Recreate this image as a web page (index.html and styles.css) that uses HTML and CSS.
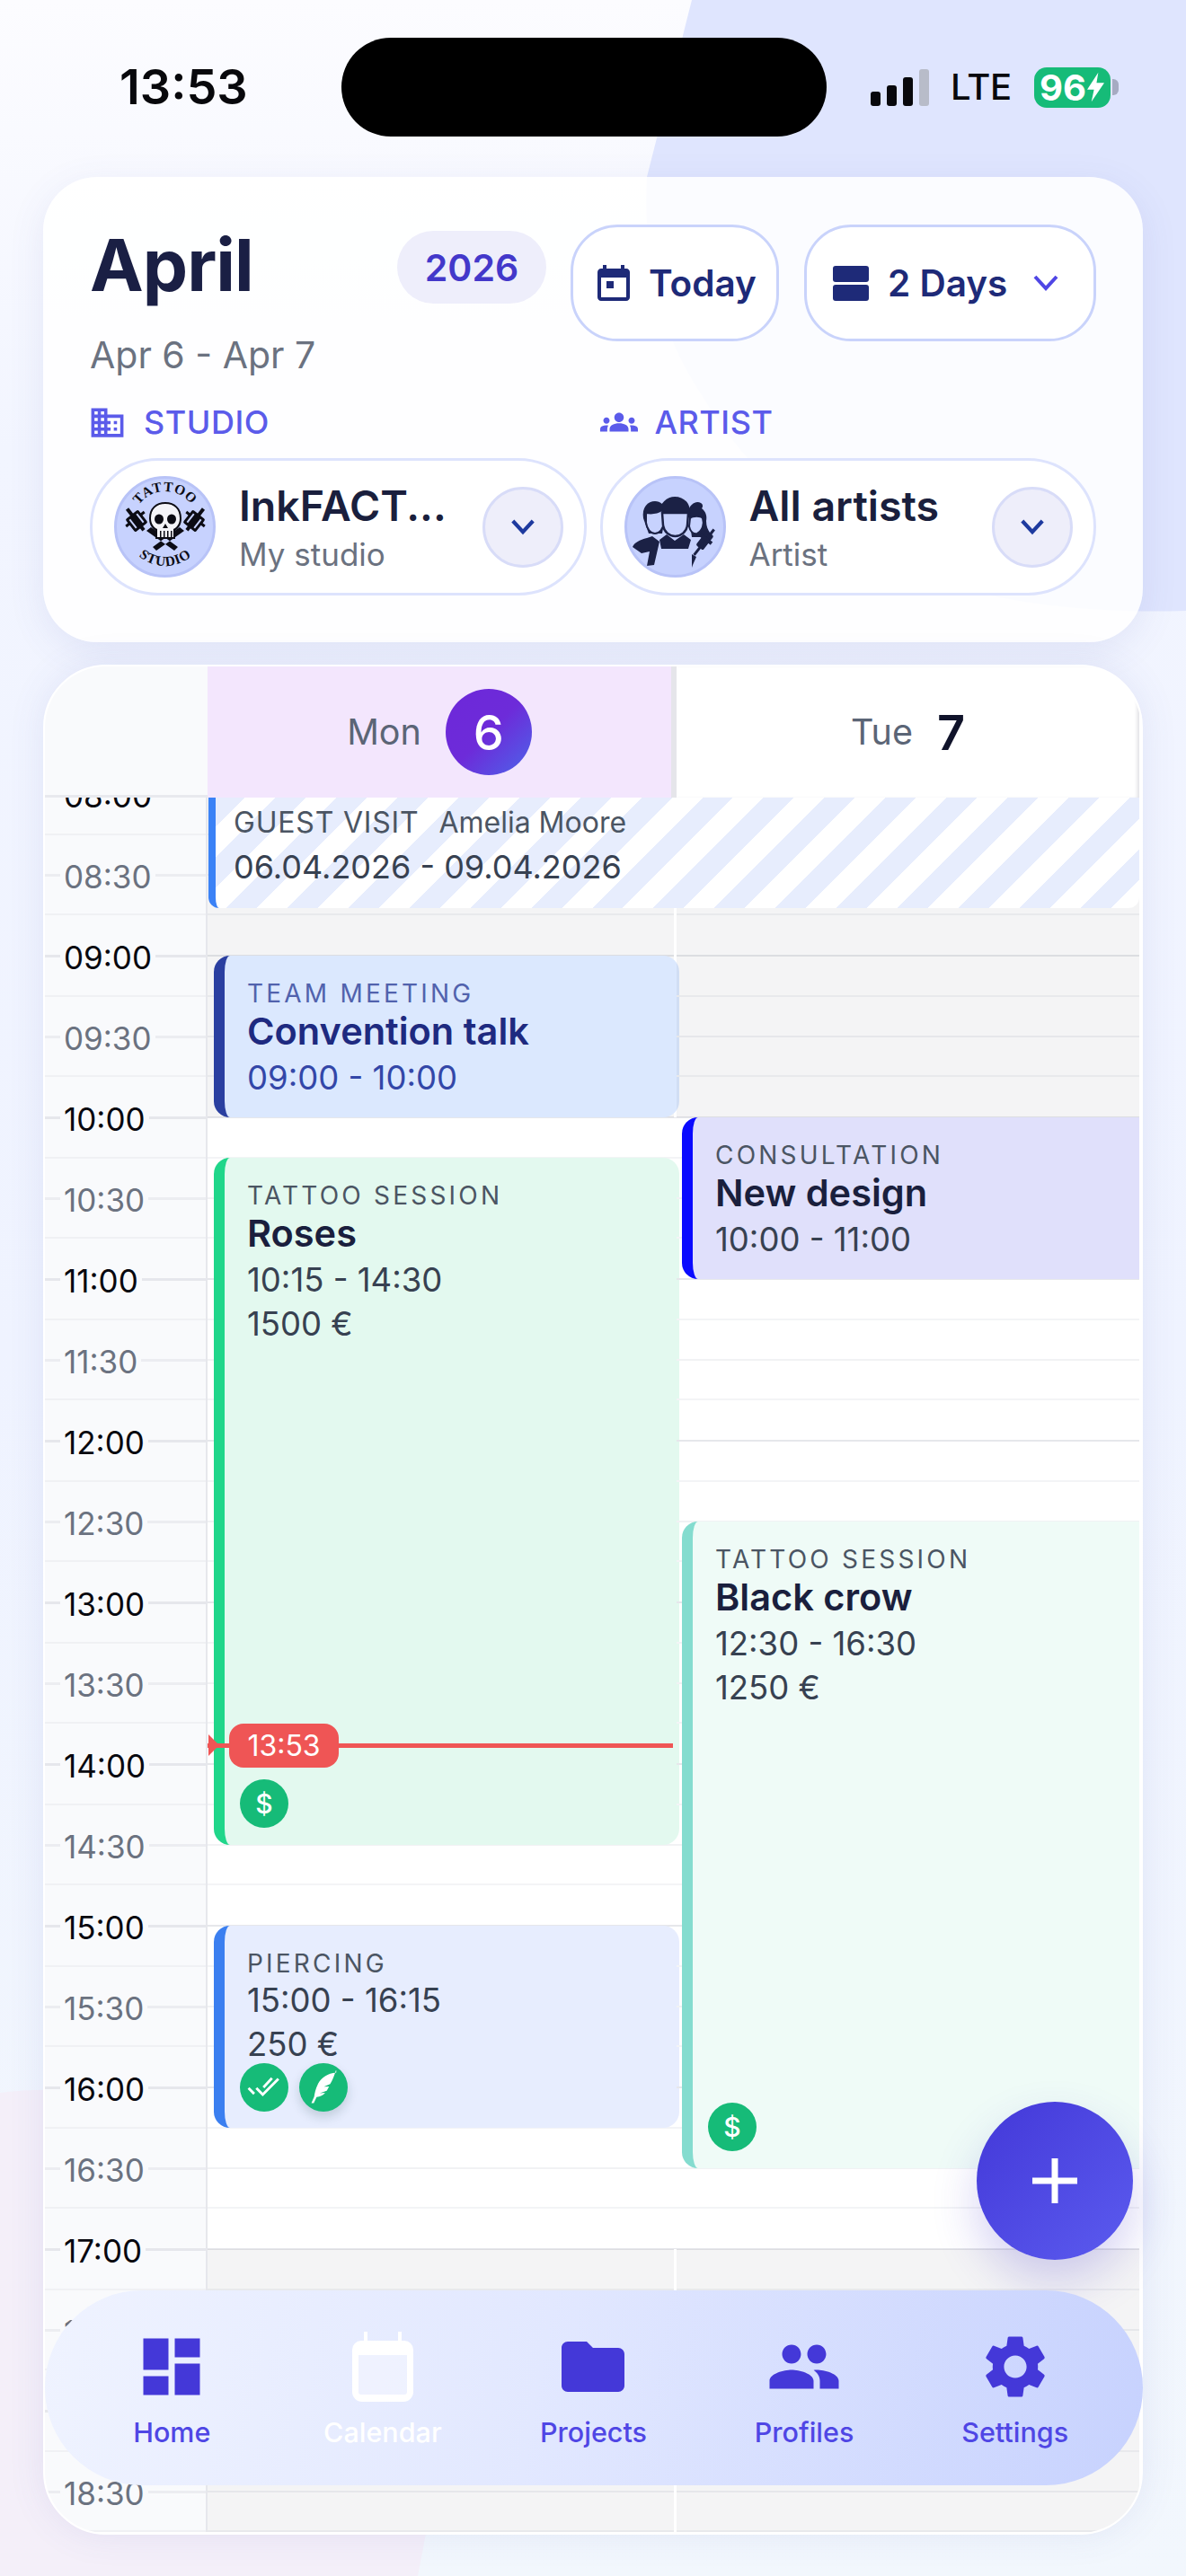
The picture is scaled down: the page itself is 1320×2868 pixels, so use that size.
FILE: index.html
```html
<!DOCTYPE html>
<html lang="en">
<head>
<meta charset="utf-8">
<title>Calendar</title>
<link rel="stylesheet" href="styles.css">
</head>
<body>
<div class="screen">
  <div class="deco deco-top"></div>
  <div class="deco deco-bottom"></div>

  <div class="status">
    <div class="clock">13:53</div>
    <div class="island"></div>
    <div class="status-right">
      <div class="signal"><i class="b1"></i><i class="b2"></i><i class="b3"></i><i class="b4"></i></div>
      <div class="lte">LTE</div>
      <div class="battery">
        <span>96</span>
        <svg class="bolt" viewBox="0 0 20 34"><path d="M13 0 0 20h8L5 34 20 12h-9z"/></svg>
      </div>
      <div class="nub"></div>
    </div>
  </div>

  <section class="head-card">
    <div class="head-top">
      <div class="title-col">
        <div class="month">April</div>
        <div class="range">Apr 6 - Apr 7</div>
      </div>
      <div class="year">2026</div>
      <div class="btn btn-today">
        <svg class="ic48" viewBox="0 0 24 24"><path d="M19 4h-1V2h-2v2H8V2H6v2H5c-1.11 0-1.99.9-1.99 2L3 20c0 1.1.89 2 2 2h14c1.1 0 2-.9 2-2V6c0-1.1-.9-2-2-2zm0 16H5V9h14v11zM8 11h4v4H8z"/></svg>
        <span>Today</span>
      </div>
      <div class="btn btn-days">
        <svg class="ic48" viewBox="0 0 24 24"><rect x="2" y="2.500" width="20" height="9" rx="1.500"/><rect x="2" y="13" width="20" height="9" rx="1.500"/></svg>
        <span>2 Days</span>
        <svg class="chev-sm" viewBox="0 0 30 20"><path d="M3 3l12 13L27 3"/></svg>
      </div>
    </div>

    <div class="pickers">
      <div class="picker">
        <div class="pick-label">
          <svg class="ic-domain" viewBox="0 0 24 24"><path d="M12 7V3H2v18h20V7H12zM6 19H4v-2h2v2zm0-4H4v-2h2v2zm0-4H4V9h2v2zm0-4H4V5h2v2zm4 12H8v-2h2v2zm0-4H8v-2h2v2zm0-4H8V9h2v2zm0-4H8V5h2v2zm10 12h-8v-2h2v-2h-2v-2h2v-2h-2V9h8v10zm-2-8h-2v2h2v-2zm0 4h-2v2h2v-2z"/></svg>
          <span class="studio-text">STUDIO</span>
        </div>
        <div class="select">
          <div class="avatar">
            <svg viewBox="0 0 107 107">
              <defs>
                <path id="arcTop" d="M18 50A36 36 0 0 1 90 50"/>
                <path id="arcBot" d="M9 52A45 45 0 0 0 99 52"/>
              </defs>
              <text class="logo-text"><textPath href="#arcTop" startOffset="50%" text-anchor="middle">TATTOO</textPath></text>
              <text class="logo-text"><textPath href="#arcBot" startOffset="50%" text-anchor="middle">STUDIO</textPath></text>
              <g fill="#0c0c14">
                <path d="M33 58l5-4 30 22-4 4zM75 58l-5-4-30 22 4 4z"/>
                <g transform="rotate(-38 22 47)">
                  <rect x="13" y="38" width="18" height="18" rx="2"/>
                  <rect x="9" y="43" width="26" height="3"/>
                  <rect x="20" y="30" width="4" height="30"/>
                  <path fill="#c7d2fe" d="M16 41h2v12h-2zM26 41h2v12h-2z"/>
                </g>
                <g transform="rotate(38 86 47)">
                  <rect x="77" y="38" width="18" height="18" rx="2"/>
                  <rect x="73" y="43" width="26" height="3"/>
                  <rect x="84" y="30" width="4" height="30"/>
                  <path fill="#c7d2fe" d="M80 41h2v12h-2zM90 41h2v12h-2z"/>
                </g>
              </g>
              <path fill="#0c0c14" d="M54 26c-11 0-18 7-18 18 0 7 3 11 7 14v9h22v-9c4-3 7-7 7-14 0-11-7-18-18-18z"/>
              <path fill="#f4f4f8" d="M54 28c-10 0-16 6-16 16 0 6 3 10 7 12v9h18v-9c4-2 7-6 7-12 0-10-6-16-16-16z"/>
              <g fill="#0c0c14">
                <ellipse cx="47" cy="45" rx="5" ry="5.500"/><ellipse cx="61" cy="45" rx="5" ry="5.500"/>
                <path d="M54 50l-3 5h6zM48 58h1.500v7H48zM52 58h1.500v7H52zM56 58h1.500v7H56zM60 58h1.500v7H60z"/>
              </g>
            </svg>
          </div>
          <div class="sel-text">
            <div class="sel-name">InkFACT...</div>
            <div class="sel-sub">My studio</div>
          </div>
          <div class="sel-chev"><svg viewBox="0 0 30 20"><path d="M3 3l12 13L27 3"/></svg></div>
        </div>
      </div>

      <div class="picker">
        <div class="pick-label">
          <svg class="ic-groups" viewBox="0 0 24 24"><path d="M12 12.750c1.630 0 3.070.39 4.240.9 1.080.48 1.760 1.560 1.760 2.730V18H6v-1.610c0-1.180.68-2.260 1.760-2.730 1.170-.52 2.610-.91 4.240-.91zM4 13c1.100 0 2-.9 2-2s-.9-2-2-2-2 .9-2 2 .9 2 2 2zm1.130 1.100C4.760 14.040 4.390 14 4 14c-.99 0-1.930.21-2.780.58C.48 14.900 0 15.620 0 16.430V18h4.500v-1.610c0-.83.23-1.610.63-2.290zM20 13c1.100 0 2-.9 2-2s-.9-2-2-2-2 .9-2 2 .9 2 2 2zm4 3.430c0-.81-.48-1.530-1.220-1.850-.85-.37-1.790-.58-2.780-.58-.39 0-.76.04-1.130.1.4.68.63 1.460.63 2.290V18H24v-1.570zM12 6c1.660 0 3 1.340 3 3s-1.340 3-3 3-3-1.340-3-3 1.340-3 3-3z"/></svg>
          <span class="artist-text">ARTIST</span>
        </div>
        <div class="select">
          <div class="avatar">
            <svg viewBox="0 0 107 107">
              <g fill="#1b2145">
                <path d="M68 36c2-8 9-12 14-9 2 1 3 4 1 6 5 4 6 9 5 14 0 6 2 10 4 13l-8 5H72z"/>
                <path d="M18 44c-2-12 5-19 13-19 6 0 11 4 12 12l-4 24H24z"/>
                <path d="M6 76c2-5 8-8 16-10l6-2 8 6-6 26-8 1 3-16-9 2z"/>
                <path d="M36 40c-1-12 8-20 17-20 10 0 18 7 17 20l3 3H33z"/>
                <path d="M36 68l8-6 9 7 10-7 8 6-3 10H38z"/>
                <g transform="rotate(38 84 72)">
                  <rect x="79" y="58" width="10" height="20" rx="2"/>
                  <rect x="83" y="52" width="3" height="36"/>
                  <path d="M76 64h16v4H76z"/>
                </g>
                <path d="M72 84l5 3-4 9 -1 3z"/>
              </g>
              <path fill="#c7d2fe" stroke="#1b2145" stroke-width="2" d="M70 44c3-3 12-3 14 0 2 6 0 14-6 17-5 1-8-3-9-8z"/>
              <path fill="#c7d2fe" stroke="#1b2145" stroke-width="2" d="M21 38c6 1 13 0 18-3l2 14c-1 7-5 12-10 12s-9-5-10-12z"/>
              <path fill="#c7d2fe" stroke="#1b2145" stroke-width="2.500" d="M39 38h29l-1 14c-1 7-7 12-13.500 12S41 59 40 52z"/>
            </svg>
          </div>
          <div class="sel-text">
            <div class="sel-name">All artists</div>
            <div class="sel-sub">Artist</div>
          </div>
          <div class="sel-chev"><svg viewBox="0 0 30 20"><path d="M3 3l12 13L27 3"/></svg></div>
        </div>
      </div>
    </div>
  </section>

  <section class="cal-card">
    <div class="cal-head">
      <div class="cal-corner"></div>
      <div class="cal-day cal-mon"><span class="dow">Mon</span><span class="dnum today-num">6</span></div>
      <div class="cal-day cal-tue"><span class="dow">Tue</span><span class="dnum">7</span></div>
    </div>
    <div class="cal-clip">
      <div class="cal-body">
        <div class="times">
          <div class="slot"><b class="hour">08:00</b></div>
          <div class="slot"><b>08:30</b></div>
          <div class="slot"><b class="hour">09:00</b></div>
          <div class="slot"><b>09:30</b></div>
          <div class="slot"><b class="hour">10:00</b></div>
          <div class="slot"><b>10:30</b></div>
          <div class="slot"><b class="hour">11:00</b></div>
          <div class="slot"><b>11:30</b></div>
          <div class="slot"><b class="hour">12:00</b></div>
          <div class="slot"><b>12:30</b></div>
          <div class="slot"><b class="hour">13:00</b></div>
          <div class="slot"><b>13:30</b></div>
          <div class="slot"><b class="hour">14:00</b></div>
          <div class="slot"><b>14:30</b></div>
          <div class="slot"><b class="hour">15:00</b></div>
          <div class="slot"><b>15:30</b></div>
          <div class="slot"><b class="hour">16:00</b></div>
          <div class="slot"><b>16:30</b></div>
          <div class="slot"><b class="hour">17:00</b></div>
          <div class="slot"><b>17:30</b></div>
          <div class="slot"><b class="hour">18:00</b></div>
          <div class="slot"><b>18:30</b></div>
        </div>

        <div class="day day-mon">
          <div class="off off-morning"></div>
          <div class="off off-evening"></div>
          <article class="ev ev-team">
            <div class="ev-label">TEAM MEETING</div>
            <div class="ev-title">Convention talk</div>
            <div class="ev-line ev-time">09:00 - 10:00</div>
          </article>
          <article class="ev ev-roses">
            <div class="ev-label">TATTOO SESSION</div>
            <div class="ev-title">Roses</div>
            <div class="ev-line ev-time">10:15 - 14:30</div>
            <div class="ev-line">1500 €</div>
            <div class="badges"><span class="badge">$</span></div>
          </article>
          <article class="ev ev-piercing">
            <div class="ev-label">PIERCING</div>
            <div class="ev-line">15:00 - 16:15</div>
            <div class="ev-line">250 €</div>
            <div class="badges badges-tight">
              <span class="badge"><svg viewBox="0 0 24 24"><path d="M1 12.500l4 4M6.500 12.500l4.500 4.500L22 6M11.500 12l6-6.500"/></svg></span>
              <span class="badge badge-shadow"><svg viewBox="0 0 24 24"><path class="fill" d="M21 1.500c-6 .5-10.500 3.500-12.800 8-1.700 3.400-2.400 6.700-2.700 9L3.500 23h1.700l2-4.200c2.500-.2 4.500-1.200 6-3l-3.800.3 4.900-1.800c.7-1 1.200-2 1.600-3l-3.600.3 4.400-1.900c1.800-3 3.200-6.400 4.300-10.700z"/></svg></span>
            </div>
          </article>
          <div class="now">
            <i class="now-tip"></i>
            <span class="now-tag">13:53</span>
          </div>
        </div>

        <div class="day day-tue">
          <div class="off off-morning"></div>
          <div class="off off-evening"></div>
          <article class="ev ev-consult">
            <div class="ev-label">CONSULTATION</div>
            <div class="ev-title">New design</div>
            <div class="ev-line ev-time">10:00 - 11:00</div>
          </article>
          <article class="ev ev-crow">
            <div class="ev-label">TATTOO SESSION</div>
            <div class="ev-title">Black crow</div>
            <div class="ev-line ev-time">12:30 - 16:30</div>
            <div class="ev-line">1250 €</div>
            <div class="badges"><span class="badge">$</span></div>
          </article>
        </div>

        <article class="guest">
          <div class="guest-top"><span class="guest-kind">GUEST VISIT</span><span>Amelia Moore</span></div>
          <div class="guest-dates">06.04.2026 - 09.04.2026</div>
        </article>
      </div>
    </div>
  </section>

  <button class="fab" type="button" aria-label="Add">
    <svg viewBox="0 0 50 50"><path d="M25 0v50M0 25h50"/></svg>
  </button>

  <nav class="tabbar">
    <div class="tab">
      <svg viewBox="0 0 24 24"><path d="M3 13h8V3H3v10zm0 8h8v-6H3v6zm10 0h8V11h-8v10zm0-18v6h8V3h-8z"/></svg>
      <span>Home</span>
    </div>
    <div class="tab tab-active">
      <svg viewBox="0 0 84 84">
        <path class="cal-fill" d="M9 22h66v50a6 6 0 0 1-6 6H15a6 6 0 0 1-6-6z"/>
        <path class="cal-solid" d="M21 3h4v10h34V3h4v10h3a10 10 0 0 1 10 10v47a11 11 0 0 1-11 11H19A11 11 0 0 1 8 70V23a10 10 0 0 1 10-10h3zM15 29v41a3 3 0 0 0 3 3h48a3 3 0 0 0 3-3V29z"/>
      </svg>
      <span>Calendar</span>
    </div>
    <div class="tab">
      <svg viewBox="0 0 24 24"><path d="M10 4H4c-1.100 0-2 .9-2 2v12c0 1.100.9 2 2 2h16c1.100 0 2-.9 2-2V8c0-1.100-.9-2-2-2h-8l-2-2z"/></svg>
      <span>Projects</span>
    </div>
    <div class="tab">
      <svg viewBox="0 0 24 24"><path d="M16 11c1.660 0 2.990-1.340 2.990-3S17.660 5 16 5c-1.660 0-3 1.340-3 3s1.340 3 3 3zm-8 0c1.660 0 2.990-1.340 2.990-3S9.660 5 8 5C6.340 5 5 6.340 5 8s1.340 3 3 3zm0 2c-2.330 0-7 1.170-7 3.500V19h14v-2.500c0-2.330-4.670-3.500-7-3.500zm8 0c-.29 0-.62.02-.97.05 1.160.84 1.970 1.970 1.970 3.450V19h6v-2.500c0-2.330-4.670-3.500-7-3.500z"/></svg>
      <span>Profiles</span>
    </div>
    <div class="tab">
      <svg viewBox="0 0 24 24"><path d="M19.140 12.940c.04-.3.06-.61.06-.94 0-.32-.02-.64-.07-.94l2.030-1.580c.18-.14.23-.41.12-.61l-1.920-3.320c-.12-.22-.37-.29-.59-.22l-2.390.96c-.5-.38-1.030-.7-1.620-.94l-.36-2.540c-.04-.24-.24-.41-.48-.41h-3.840c-.24 0-.43.17-.47.41l-.36 2.540c-.59.24-1.130.57-1.620.94l-2.390-.96c-.22-.08-.47 0-.59.22L2.740 8.870c-.12.21-.08.47.12.61l2.030 1.580c-.05.3-.09.63-.09.94s.02.64.07.94l-2.030 1.580c-.18.14-.23.41-.12.61l1.920 3.320c.12.22.37.29.59.22l2.390-.96c.5.38 1.030.7 1.620.94l.36 2.540c.05.24.24.41.48.41h3.840c.24 0 .44-.17.47-.41l.36-2.540c.59-.24 1.130-.56 1.620-.94l2.390.96c.22.08.47 0 .59-.22l1.920-3.320c.12-.22.07-.47-.12-.61l-2.010-1.580zM12 15.600c-1.980 0-3.600-1.620-3.600-3.600s1.620-3.600 3.600-3.600 3.600 1.620 3.600 3.600-1.620 3.600-3.600 3.600z"/></svg>
      <span>Settings</span>
    </div>
  </nav>
</div>
</body>
</html>
```

FILE: styles.css
```css
* { box-sizing: border-box; }
html, body { margin: 0; padding: 0; }
body {
  width: 1320px;
  height: 2868px;
  overflow: hidden;
  font-family: Inter, "Liberation Sans", sans-serif;
  color: #1a1f3d;
}
.screen {
  position: relative;
  width: 1320px;
  height: 2868px;
  overflow: hidden;
  background: linear-gradient(180deg, #fcfcff 0, #f2f5ff 500px, #eff3ff 1500px, #f2f7fd 2868px);
}
.deco { position: absolute; left: 0; width: 1320px; }
.deco-top {
  top: 0;
  height: 700px;
  background: #dfe5fe;
  clip-path: path("M770 0 L720 197 C715 290 735 370 779 437 C860 570 1000 690 1320 680 L1320 0 Z");
}
.deco-bottom {
  top: 2300px;
  height: 568px;
  background: #f4eff9;
  clip-path: path("M0 30 C250 0 440 180 478 500 L465 568 L0 568 Z");
}

/* status bar */
.status {
  position: relative;
  display: flex;
  height: 110px;
  margin: 42px 0 45px;
}
.clock {
  width: 380px;
  padding-left: 133px;
  font-size: 54px;
  font-weight: 600;
  line-height: 110px;
  color: #08080c;
}
.island { width: 540px; height: 110px; border-radius: 55px; background: #000; }
.status-right { position: relative; display: flex; align-items: center; padding-left: 49px; }
.signal { display: flex; align-items: flex-end; gap: 7px; height: 41px; }
.signal i { display: block; width: 11px; border-radius: 3px; background: #08080c; }
.b1 { height: 16px; }
.b2 { height: 23px; }
.b3 { height: 32px; }
.signal .b4 { height: 41px; background: #b8bcc9; }
.lte { margin-left: 24px; font-size: 40px; font-weight: 500; color: #08080c; line-height: 110px; letter-spacing: -0.5px; }
.battery {
  display: flex;
  align-items: center;
  justify-content: center;
  gap: 1px;
  width: 85px;
  height: 45px;
  margin-left: 25px;
  border-radius: 14px;
  background: #16bb78;
  color: #fff;
  font-size: 40px;
  font-weight: 700;
}
.bolt { width: 19px; height: 34px; fill: #fff; }
.nub { width: 7px; height: 18px; margin-left: 2px; border-radius: 0 6px 6px 0; background: #a6abc2; }

/* header card */
.head-card {
  position: relative;
  height: 518px;
  margin: 0 48px;
  padding: 53px 52px 0;
  border-radius: 60px;
  background: rgba(255, 255, 255, 0.88);
  box-shadow: 0 10px 40px rgba(80, 90, 180, 0.1);
}
.head-top { display: flex; align-items: flex-start; height: 170px; margin-bottom: 28px; }
.title-col { width: 342px; }
.month { font-size: 80px; line-height: 90px; font-weight: 700; color: #1a1f44; letter-spacing: -1px; }
.range { margin-top: 30px; font-size: 41px; line-height: 50px; color: #6b7280; }
.year {
  display: flex;
  align-items: center;
  justify-content: center;
  width: 166px;
  height: 81px;
  margin: 7px 27px 0 0;
  border-radius: 41px;
  background: #eeeefb;
  color: #4338ca;
  font-size: 41px;
  font-weight: 600;
}
.btn {
  display: flex;
  align-items: center;
  height: 130px;
  border: 3px solid #c9d3fb;
  border-radius: 52px;
  background: rgba(255, 255, 255, 0.9);
  color: #1e2a78;
  font-size: 40.5px;
  font-weight: 600;
}
.btn-today { width: 232px; padding-left: 21px; gap: 15px; margin-right: 28px; }
.btn-days { width: 325px; padding-left: 25px; gap: 17px; }
.ic48 { width: 48px; height: 48px; fill: #1e2a78; flex: none; }
.chev-sm { width: 30px; height: 20px; margin-left: 11px; fill: none; stroke: #4f46e5; stroke-width: 4; }

.pickers { display: flex; gap: 15px; }
.picker { width: 552.5px; }
.pick-label {
  display: flex;
  align-items: center;
  height: 44px;
  margin-bottom: 18px;
  color: #5b5bea;
  font-size: 36px;
  font-weight: 500;
  letter-spacing: 0.5px;
}
.ic-domain { width: 43px; height: 43px; fill: #5b5bea; margin-left: -2px; flex: none; }
.studio-text { margin-left: 19px; }
.ic-groups { width: 42px; height: 42px; fill: #5b5bea; flex: none; }
.artist-text { margin-left: 19px; }
.select {
  display: flex;
  align-items: center;
  height: 153px;
  padding: 0 23px 0 24px;
  border: 3px solid #dde3fd;
  border-radius: 76px;
  background: rgba(255, 255, 255, 0.9);
}
.avatar {
  flex: none;
  width: 113px;
  height: 113px;
  border: 3px solid #b8c3f7;
  border-radius: 50%;
  background: #c7d2fe;
  overflow: hidden;
}
.avatar svg { display: block; width: 100%; height: 100%; }
.logo-text { font-family: "Liberation Serif", serif; font-size: 15.500px; font-weight: 700; fill: #0c0c14; letter-spacing: 0.8px; }
.sel-text { flex: 1; margin-left: 26px; min-width: 0; }
.sel-name { font-size: 46.5px; line-height: 56px; font-weight: 600; color: #1a1f3d; }
.sel-sub { margin-top: 4px; font-size: 35px; line-height: 44px; color: #6b7280; }
.sel-chev {
  display: flex;
  align-items: center;
  justify-content: center;
  flex: none;
  width: 90px;
  height: 90px;
  border: 3px solid #d8dcf8;
  border-radius: 50%;
  background: #eeeefa;
}
.sel-chev svg { width: 28px; height: 19px; fill: none; stroke: #1e3a9f; stroke-width: 4.5; }

/* calendar */
.cal-card {
  position: relative;
  height: 2082px;
  margin: 25px 48px 0;
  border: 2px solid #fff;
  border-radius: 70px;
  background: #fff;
  overflow: hidden;
  box-shadow: 0 0 40px rgba(80, 90, 180, 0.1);
}
.cal-head { display: grid; grid-template-columns: 181px 522px 515px; height: 146px; }
.cal-corner { background: #f9fafc; border-bottom: 3px solid #e8e9ee; }
.cal-day { display: flex; align-items: center; justify-content: center; gap: 27px; }
.cal-mon { background: #f3e6fd; border-right: 6px solid #e5e5ea; }
.cal-tue { background: #fff; box-shadow: inset -4px 0 4px -2px #dedee3; }
.dow { font-size: 39.5px; font-weight: 400; color: #5b6576; }
.dnum { font-size: 54px; font-weight: 600; color: #10132a; }
.today-num {
  display: flex;
  align-items: center;
  justify-content: center;
  width: 96px;
  height: 96px;
  border-radius: 50%;
  color: #fff;
  font-weight: 500;
  background: linear-gradient(135deg, #6d28d9 0, #6d2bd9 50%, #4f5fe8 95%);
}
.cal-clip { height: 1934px; overflow: hidden; }
.cal-body {
  display: grid;
  grid-template-columns: 181px 522px 515px;
  grid-template-rows: 1980px;
  margin-top: -49px;
}
.times {
  grid-column: 1;
  grid-row: 1;
  display: flex;
  flex-direction: column;
  align-items: flex-start;
  border-right: 2px solid #e6e7ec;
  background-color: #f9fafc;
  background-image: repeating-linear-gradient(180deg, transparent 0 44px, #e6e7ec 44px 47px, transparent 47px 89px, #f0f1f4 89px 91px, transparent 91px 134px, #ecedf1 134px 137px, transparent 137px 178px, #f0f1f4 178px 180px);
}
.slot { display: flex; align-items: center; height: 90px; flex: none; padding: 4px 0 0 17px; }
.slot b {
  padding: 0 4px;
  background: #f9fafc;
  font-size: 35px;
  font-weight: 400;
  line-height: 42px;
  color: #6b7280;
}
.slot .hour { color: #08080f; }
.day {
  position: relative;
  display: grid;
  grid-template-rows: repeat(44, 45px);
  background-image: repeating-linear-gradient(180deg, transparent 0 44px, #e6e7eb 44px 46px, transparent 46px 89px, #f3f4f6 89px 91px, transparent 91px 134px, #f1f2f4 134px 136px, transparent 136px 178px, #f3f4f6 178px 180px);
}
.day-mon { grid-column: 2; grid-row: 1; }
.day-tue { grid-column: 3; grid-row: 1; }
.off { grid-column: 1; background: rgba(20, 25, 50, 0.048); }
.day-mon .off { border-right: 3px solid #fff; }
.off-morning { grid-row: 1 / 10; }
.off-evening { grid-row: 38 / 45; }

.ev {
  position: relative;
  grid-column: 1;
  display: flex;
  flex-direction: column;
  min-width: 0;
  padding: 25px 10px 19px 25px;
  border-left: 12px solid;
  border-radius: 18px;
  color: #374151;
}
.day-mon .ev { margin: 0 -3px 0 7px; }
.day-tue .ev { margin-left: 6px; border-radius: 18px 0 0 18px; }
.ev-label { font-size: 28px; line-height: 34px; letter-spacing: 3.2px; color: #4b5563; }
.ev-title { font-size: 41.5px; line-height: 50px; font-weight: 600; color: #1a1f3d; }
.ev-line { font-size: 36.5px; line-height: 49px; }
.ev-time { margin-top: 3px; }
.ev-team { grid-row: 6 / 10; background: #dbe8fe; border-color: #2a3fa0; }
.ev-team .ev-label { color: #5162ad; }
.ev-team .ev-title { color: #1e2a80; }
.ev-team .ev-line { color: #3347a8; }
.ev-roses { grid-row: 11 / 28; background: #e3f9ef; border-color: #20d68a; }
.ev-piercing { grid-row: 30 / 35; background: #e7edfe; border-color: #3b7ff0; }
.ev-consult { grid-row: 10 / 14; background: #e0e0fb; border-color: #0a0aff; }
.ev-crow { grid-row: 20 / 36; background: #effbf7; border-color: #84dccf; }
.badges { display: flex; gap: 12px; margin: auto 0 0 -8px; }
.ev-piercing .badges { margin-top: -4px; }
.badge {
  display: flex;
  align-items: center;
  justify-content: center;
  width: 54px;
  height: 54px;
  border-radius: 50%;
  background: #16bb78;
  color: #fff;
  font-size: 30px;
  font-weight: 500;
}
.badge svg { width: 38px; height: 38px; fill: none; stroke: #fff; stroke-width: 1.800; }
.badge .fill { fill: #fff; stroke: none; }
.badge-shadow { box-shadow: 0 6px 12px rgba(20, 60, 60, 0.18); }

.now {
  position: absolute;
  top: 1104px;
  left: 0;
  width: 518px;
  height: 5px;
  margin-top: -2px;
  background: #ef5555;
  z-index: 3;
}
.now-tip {
  position: absolute;
  left: 1px;
  top: -10px;
  width: 0;
  height: 0;
  border-left: 12px solid #ef5555;
  border-top: 12px solid transparent;
  border-bottom: 12px solid transparent;
}
.now-tag {
  position: absolute;
  left: 24px;
  top: -22px;
  width: 122px;
  height: 49px;
  border-radius: 16px;
  background: #ef5555;
  color: #fff;
  font-size: 32px;
  font-weight: 400;
  line-height: 49px;
  text-align: center;
}

.guest {
  position: relative;
  z-index: 4;
  grid-column: 2 / 4;
  grid-row: 1;
  align-self: start;
  height: 124px;
  margin: 48px 0 0 1px;
  padding: 7px 0 0 20px;
  border-left: 8px solid #3b82f6;
  border-radius: 0 0 12px 12px;
  color: #4b5563;
  background: repeating-linear-gradient(135deg, #e7edfd 0 24px, #fff 24px 48px);
}
.guest-top { display: flex; gap: 22px; font-size: 32px; line-height: 44px; }
.guest-kind { letter-spacing: 0.800px; }
.guest-dates { margin-top: 2px; font-size: 36px; line-height: 50px; color: #374151; }

/* floating */
.fab {
  position: absolute;
  left: 1087px;
  top: 2340px;
  display: flex;
  align-items: center;
  justify-content: center;
  width: 174px;
  height: 176px;
  padding: 0;
  border: 0;
  border-radius: 50%;
  background: linear-gradient(135deg, #4338d8 0, #5b5bef 100%);
  box-shadow: 0 24px 50px rgba(67, 56, 202, 0.22);
  z-index: 5;
}
.fab svg { width: 50px; height: 50px; fill: none; stroke: #fff; stroke-width: 7; }

.tabbar {
  position: absolute;
  left: 50px;
  top: 2550px;
  display: flex;
  width: 1222px;
  height: 217px;
  padding: 0 25px 0 24px;
  border-radius: 108px;
  background: linear-gradient(100deg, #eff3ff 0, #e2e8ff 45%, #c7d2fe 100%);
  z-index: 6;
}
.tab {
  flex: 1;
  display: flex;
  flex-direction: column;
  align-items: center;
  padding-top: 43px;
  color: #4f46e5;
  font-size: 30.500px;
  font-weight: 500;
}
.tab svg { width: 84px; height: 84px; fill: #4438d8; flex: none; }
.tab span { margin-top: 11px; line-height: 40px; }
.tab-active { color: #fff; }
.tab-active svg { fill: #fff; }
.cal-fill { fill: rgba(255, 255, 255, 0.35); }
.cal-solid { fill: #fff; fill-rule: evenodd; }
```
